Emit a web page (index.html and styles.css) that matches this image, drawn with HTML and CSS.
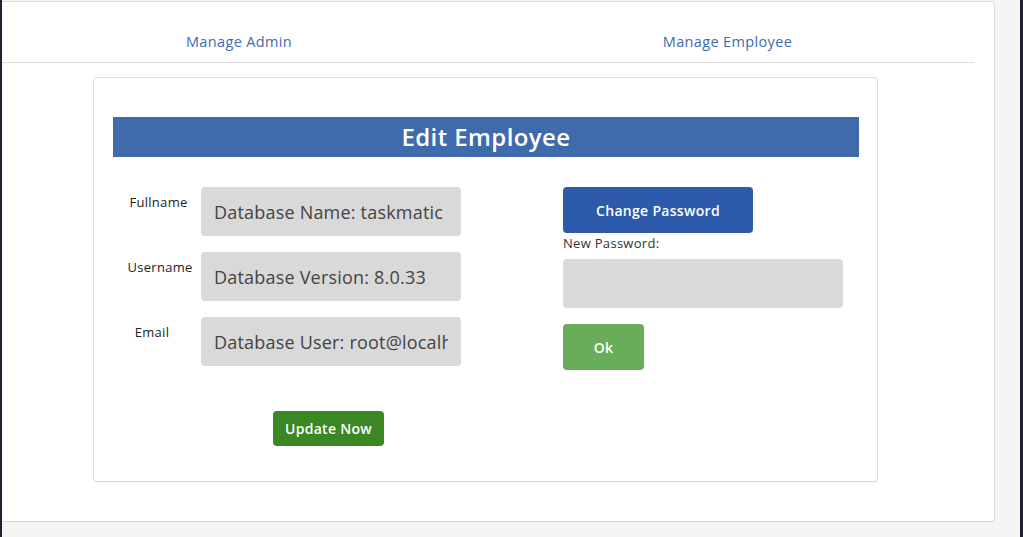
FILE: index.html
```html
<!DOCTYPE html>
<html lang="en">
<head>
<meta charset="utf-8">
<title>Edit Employee</title>
<link rel="stylesheet" href="styles.css">
</head>
<body>
<div class="panel">
  <nav class="tabs">
    <a class="tab tab-admin" href="#">Manage Admin</a>
    <a class="tab tab-employee" href="#">Manage Employee</a>
  </nav>
  <section class="card">
    <h1 class="card-title">Edit Employee</h1>
    <div class="form">
      <div class="col-left">
        <div class="row">
          <label class="row-label label-fullname">Fullname</label>
          <input class="field" type="text" value="Database Name: taskmatic" readonly>
        </div>
        <div class="row">
          <label class="row-label label-username">Username</label>
          <input class="field" type="text" value="Database Version: 8.0.33" readonly>
        </div>
        <div class="row">
          <label class="row-label label-email">Email</label>
          <input class="field" type="text" value="Database User: root@localhost" readonly>
        </div>
        <div class="actions">
          <button class="btn btn-update" type="button">Update Now</button>
        </div>
      </div>
      <div class="col-right">
        <button class="btn btn-change" type="button">Change Password</button>
        <label class="np-label">New Password:</label>
        <input class="field field-wide" type="password">
        <button class="btn btn-ok" type="button">Ok</button>
      </div>
    </div>
  </section>
</div>
</body>
</html>
```
FILE: styles.css
```css
* { box-sizing: border-box; }
html, body { margin: 0; padding: 0; }
body {
  background: #f5f5f5;
  border-left: 2px solid #1f2233;
  border-right: 3px solid #1f2233;
  height: 537px;
  overflow: hidden;
  font-family: "Open Sans", "Liberation Sans", sans-serif;
  color: #222;
}
.panel {
  margin-top: 1px;
  width: 993px;
  height: 521px;
  background: #fff;
  border-top: 1px solid #dcdcdc;
  border-right: 1px solid #dcdcdc;
  border-bottom: 1px solid #d6d6d6;
  border-radius: 0 4px 4px 0;
}
.tabs {
  display: grid;
  grid-template-columns: 474px 1fr;
  margin-right: 20px;
  padding: 30px 0 10px;
  border-bottom: 1px solid #dadada;
}
.tab {
  text-align: center;
  font-size: 14.5px;
  letter-spacing: 0.35px;
  line-height: 20px;
  color: #3d6cb0;
  text-decoration: none;
}
.tab-employee { padding-left: 5px; }
.card {
  margin: 14px 0 0 91px;
  width: 785px;
  height: 405px;
  border: 1px solid #dedede;
  border-bottom-color: #d4d4d4;
  border-radius: 4px;
  padding: 39px 18px 0 19px;
}
.card-title {
  margin: 0;
  height: 40px;
  background: #3f6bab;
  color: #fff;
  text-align: center;
  font-size: 24px;
  font-weight: 600;
  letter-spacing: 0.4px;
  line-height: 40px;
}
.form {
  display: grid;
  grid-template-columns: 431px 1fr;
  margin-top: 30px;
}
.row {
  display: flex;
  margin-bottom: 16px;
}
.row-label {
  width: 88px;
  text-align: center;
  font-size: 13px;
  letter-spacing: 0.3px;
  line-height: 20px;
  margin-top: 5px;
}
.label-fullname { padding-left: 3px; }
.label-username { padding-left: 6px; }
.label-email { padding-right: 10px; }
.field {
  display: block;
  width: 260px;
  height: 49px;
  border: none;
  border-radius: 4px;
  background: #d9d9d9;
  padding: 0 13px;
  font-family: inherit;
  font-size: 18px;
  letter-spacing: 0.2px;
  color: #444;
  outline: none;
}
.actions {
  display: flex;
  justify-content: center;
  padding-top: 29px;
}
.btn {
  border: none;
  border-radius: 4px;
  color: #fff;
  font-family: inherit;
  font-weight: 600;
  font-size: 14px;
  letter-spacing: 0.3px;
  cursor: pointer;
}
.btn-update {
  width: 111px;
  height: 35px;
  background: #3a8724;
}
.col-right {
  padding-left: 19px;
  display: flex;
  flex-direction: column;
  align-items: flex-start;
}
.btn-change {
  width: 190px;
  height: 46px;
  background: #2d5aaa;
}
.np-label {
  font-size: 13px;
  letter-spacing: 0.3px;
  line-height: 20px;
  color: #333;
  margin-bottom: 6px;
}
.field-wide {
  width: 280px;
}
.btn-ok {
  margin-top: 16px;
  width: 81px;
  height: 46px;
  background: #68ad5a;
}
```
